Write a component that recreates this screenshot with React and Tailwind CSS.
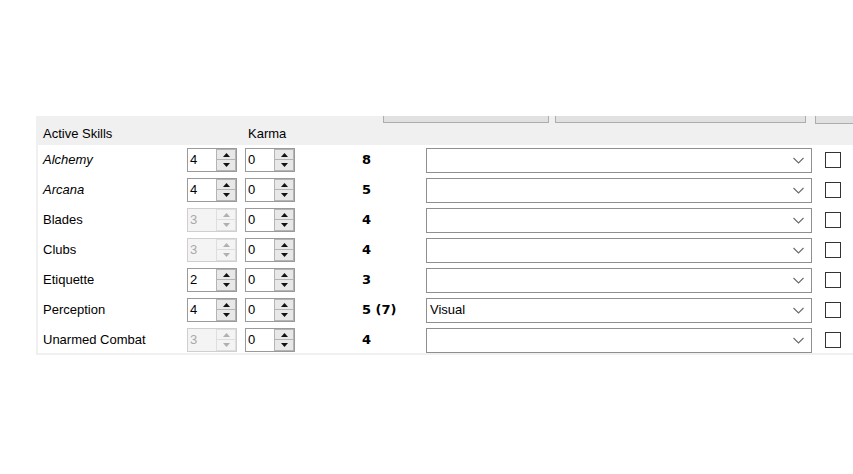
import React from "react";

const skills = [
  { name: "Alchemy", italic: true, rating: "4", karma: "0", value: "8", disabled: false, spec: "" },
  { name: "Arcana", italic: true, rating: "4", karma: "0", value: "5", disabled: false, spec: "" },
  { name: "Blades", rating: "3", karma: "0", value: "4", disabled: true, spec: "" },
  { name: "Clubs", rating: "3", karma: "0", value: "4", disabled: true, spec: "" },
  { name: "Etiquette", rating: "2", karma: "0", value: "3", disabled: false, spec: "" },
  { name: "Perception", rating: "4", karma: "0", value: "5 (7)", disabled: false, spec: "Visual" },
  { name: "Unarmed Combat", rating: "3", karma: "0", value: "4", disabled: true, spec: "" },
];

function Arrow({ up, color }) {
  return (
    <svg width="7" height="4" viewBox="0 0 7 4" className="block">
      {up ? (
        <polygon points="0,4 7,4 3.5,0" fill={color} />
      ) : (
        <polygon points="0,0 7,0 3.5,4" fill={color} />
      )}
    </svg>
  );
}

function Spinner({ value, disabled }) {
  return (
    <div
      className={
        "flex h-[24px] w-[50px] shrink-0 border " +
        (disabled ? "border-[#cfcfcf] bg-[#f4f4f4]" : "border-[#9a9a9a] bg-white")
      }
    >
      <div
        className={
          "flex-1 pl-[2px] text-[13px] leading-[22px] " +
          (disabled ? "text-[#a8a8a8]" : "text-black")
        }
      >
        {value}
      </div>
      <div className="flex w-[20px] flex-col">
        <div
          className={
            "flex h-[11px] items-center justify-center border " +
            (disabled ? "border-[#dedede] bg-[#f4f4f4]" : "border-[#b4b4b4] bg-[#e8e8e8]")
          }
        >
          <Arrow up color={disabled ? "#b0b0b0" : "#111"} />
        </div>
        <div
          className={
            "flex h-[11px] items-center justify-center border border-t-0 " +
            (disabled ? "border-[#dedede] bg-[#f4f4f4]" : "border-[#b4b4b4] bg-[#e8e8e8]")
          }
        >
          <Arrow color={disabled ? "#b0b0b0" : "#111"} />
        </div>
      </div>
    </div>
  );
}

function Dropdown({ value }) {
  return (
    <div className="flex h-[25px] w-[386px] shrink-0 items-center border border-[#8f8f8f] bg-white pl-[3px] pr-[7px]">
      <div className="flex-1 text-[13px] text-black">{value}</div>
      <svg width="11" height="7" viewBox="0 0 11 7">
        <polyline points="0.5,1 5.5,6 10.5,1" fill="none" stroke="#6a6a6a" strokeWidth="1.1" />
      </svg>
    </div>
  );
}

export default function App() {
  return (
    <div
      className="h-[474px] w-[853px] overflow-hidden bg-white"
      style={{ fontFamily: '"Liberation Sans", Arial, sans-serif' }}
    >
      <div className="mt-[116px] ml-[36px] bg-[#f0f0f0] pb-[2px] pl-[2px]">
        <div className="h-[29px]">
          <div className="flex h-[7px] pl-[345px]">
            <div className="w-[166px] shrink-0 border-x border-b border-[#adadad] bg-[#e1e1e1]" />
            <div className="ml-[6px] w-[251px] shrink-0 border-x border-b border-[#adadad] bg-[#e1e1e1]" />
            <div className="ml-[9px] h-[8px] w-[80px] shrink-0 border-x border-b border-[#adadad] bg-[#e1e1e1]" />
          </div>
          <div className="flex h-[22px] items-center text-[13px] text-black">
            <div className="w-[210px] pl-[5px]">Active Skills</div>
            <div>Karma</div>
          </div>
        </div>
        <div className="h-[208px] overflow-hidden bg-white">
          {skills.map((s) => (
            <div key={s.name} className="flex h-[30px] items-center">
              <div
                className={
                  "w-[149px] shrink-0 pl-[5px] text-[13px] text-black " + (s.italic ? "italic" : "")
                }
              >
                {s.name}
              </div>
              <Spinner value={s.rating} disabled={s.disabled} />
              <div className="ml-[8px]">
                <Spinner value={s.karma} />
              </div>
              <div
                className="ml-[67px] w-[64px] shrink-0 text-[13px] font-bold text-black"
                style={{ fontFamily: '"DejaVu Sans", Verdana, sans-serif' }}
              >
                {s.value}
              </div>
              <Dropdown value={s.spec} />
              <div className="ml-[13px] h-[16px] w-[16px] shrink-0 border border-[#333333] bg-white" />
            </div>
          ))}
        </div>
      </div>
    </div>
  );
}
